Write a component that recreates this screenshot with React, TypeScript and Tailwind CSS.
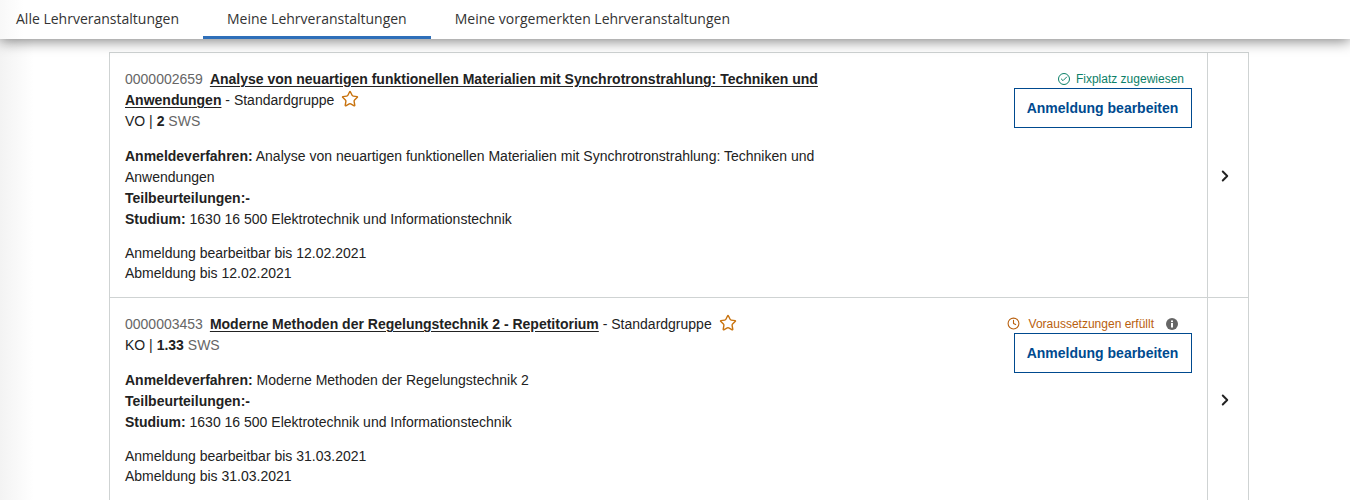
import { Check, ChevronRight, Clock, Star } from "lucide-react";
import type { ReactNode } from "react";

const TABS = ["Alle Lehrveranstaltungen", "Meine Lehrveranstaltungen", "Meine vorgemerkten Lehrveranstaltungen"];

function CourseRow({
  number,
  title,
  type,
  sws,
  status,
  procedure,
  deadline,
  heightClass,
  chevronClass,
}: {
  number: string;
  title: string;
  type: string;
  sws: string;
  status: ReactNode;
  procedure: string;
  deadline: string;
  heightClass: string;
  chevronClass: string;
}) {
  return (
    <div className={`flex ${heightClass}`}>
      <div className="flex-1 flex justify-between pl-[15px] pr-[15px] pt-[16px]">
        <div className="w-[700px] text-[14px] leading-[21px] text-[#222]">
          <div>
            <span className="text-[#666]">{number}</span>
            <a className="ml-[7px] font-bold underline underline-offset-2 text-[#222]">{title}</a>
            <span> - Standardgruppe</span>
            <Star size={18} strokeWidth={1.9} className="inline-block ml-[7px] -mt-[4px] text-[#c8730f]" />
          </div>
          <div>
            {type} | <b>{sws}</b> <span className="text-[#666]">SWS</span>
          </div>
          <div className="mt-[14px]">
            <b>Anmeldeverfahren:</b> {procedure}
          </div>
          <div>
            <b>Teilbeurteilungen:-</b>
          </div>
          <div>
            <b>Studium:</b> 1630 16 500 Elektrotechnik und Informationstechnik
          </div>
          <div className="mt-[13px] leading-[20px]">Anmeldung bearbeitbar bis {deadline}</div>
          <div className="leading-[20px]">Abmeldung bis {deadline}</div>
        </div>
        <div className="w-[178px] flex flex-col items-end">
          {status}
          <button className="w-[178px] h-[40px] pr-[1px] border border-[#004a8f] text-[14px] font-bold text-[#004a8f]">
            Anmeldung bearbeiten
          </button>
        </div>
      </div>
      <div className={`w-[41px] pr-[6px] border-l border-[#cfd3d3] flex justify-center ${chevronClass}`}>
        <ChevronRight size={18} strokeWidth={2.6} className="text-[#222]" />
      </div>
    </div>
  );
}

export default function App() {
  return (
    <div
      className="h-[500px] overflow-hidden bg-[linear-gradient(90deg,#f3f3f3_0,#fff_34px)]"
      style={{ fontFamily: '"Liberation Sans", Arial, sans-serif' }}
    >
      <div className="h-[39px] bg-[linear-gradient(90deg,#f8f8f8_0,#fff_24px)] shadow-[0_2px_14px_rgba(0,0,0,0.5)] flex pl-[16px] relative font-['Open_Sans',sans-serif] text-[14px] text-[#333]">
        {TABS.map((tab, i) => (
          <div
            key={tab}
            className={
              i === 1
                ? "h-[39px] px-[24px] pt-[9px] leading-[20px] border-b-[3px] border-[#2f6fb9]"
                : i === 0
                  ? "h-[39px] pt-[9px] pr-[24px] leading-[20px]"
                  : "h-[39px] px-[24px] pt-[9px] leading-[20px]"
            }
          >
            {tab}
          </div>
        ))}
      </div>
      <div className="mt-[13px] ml-[109px] w-[1140px] border border-[#cfd3d3] bg-white">
        <CourseRow
          number="0000002659"
          title="Analyse von neuartigen funktionellen Materialien mit Synchrotronstrahlung: Techniken und Anwendungen"
          type="VO"
          sws="2"
          procedure="Analyse von neuartigen funktionellen Materialien mit Synchrotronstrahlung: Techniken und Anwendungen"
          deadline="12.02.2021"
          heightClass="h-[244px]"
          chevronClass="pt-[114px]"
          status={
            <div className="h-[19px] flex items-center text-[12px] text-[#0b8068] pr-[8px]">
              <span className="mr-[6px] w-[12px] h-[12px] rounded-full border border-[#0b8068] flex items-center justify-center">
                <Check size={8} strokeWidth={3} />
              </span>
              Fixplatz zugewiesen
            </div>
          }
        />
        <div className="border-t border-[#cfd3d3]">
          <CourseRow
            number="0000003453"
            title="Moderne Methoden der Regelungstechnik 2 - Repetitorium"
            type="KO"
            sws="1.33"
            procedure="Moderne Methoden der Regelungstechnik 2"
            deadline="31.03.2021"
            heightClass="h-[210px]"
            chevronClass="pt-[93px]"
            status={
              <div className="h-[19px] flex items-center text-[12px] text-[#b9600e] pr-[14px] whitespace-nowrap">
                <Clock size={13} strokeWidth={2} className="mr-[9px]" />
                Voraussetzungen erfüllt
                <svg width="12" height="12" viewBox="0 0 12 12" className="ml-[12px]">
                  <circle cx="6" cy="6" r="6" fill="#666" />
                  <rect x="5" y="5" width="2" height="4.5" fill="#fff" />
                  <rect x="5" y="2.5" width="2" height="1.6" fill="#fff" />
                </svg>
              </div>
            }
          />
        </div>
      </div>
    </div>
  );
}
